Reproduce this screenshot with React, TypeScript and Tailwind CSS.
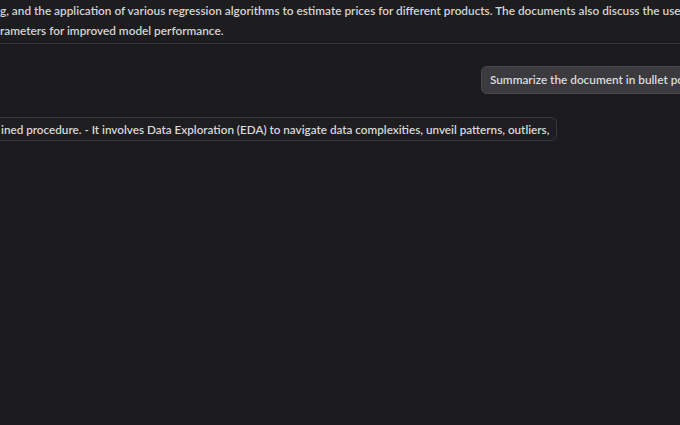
export default function App() {
  return (
    <div
      className="w-[680px] h-[425px] overflow-hidden bg-[#1b1b1d] text-[#d4d4d6]"
      style={{ fontFamily: 'Lato, "Noto Sans", sans-serif' }}
    >
      <div className="border-b border-[#333336] bg-[#1d1d1f] pt-[1px] pb-[2px]">
        <p className="whitespace-nowrap text-[11.8px] font-semibold leading-[20px]">
          g, and the application of various regression algorithms to estimate prices for different products. The documents also discuss the use
        </p>
        <p className="whitespace-nowrap text-[11.8px] font-semibold leading-[20px]">
          rameters for improved model performance.
        </p>
      </div>

      <div className="flex justify-end pt-[22px]">
        <div className="-mr-[36px] rounded-[6px] border border-[#48484d] bg-[#3a3a3f] py-[5px] pl-[8px] pr-[12px] whitespace-nowrap text-[11.8px] font-semibold leading-[16px] text-[#dcdcde]">
          Summarize the document in bullet points
        </div>
      </div>

      <div className="flex pt-[23px]">
        <div className="-ml-[12px] rounded-[6px] border border-[#38383b] bg-[#1e1e20] py-[3px] pl-[12px] pr-[7px] whitespace-nowrap text-[11.7px] font-semibold leading-[16px] text-[#d8d8da]">
          ined procedure. - It involves Data Exploration (EDA) to navigate data complexities, unveil patterns, outliers,
        </div>
      </div>
    </div>
  )
}
